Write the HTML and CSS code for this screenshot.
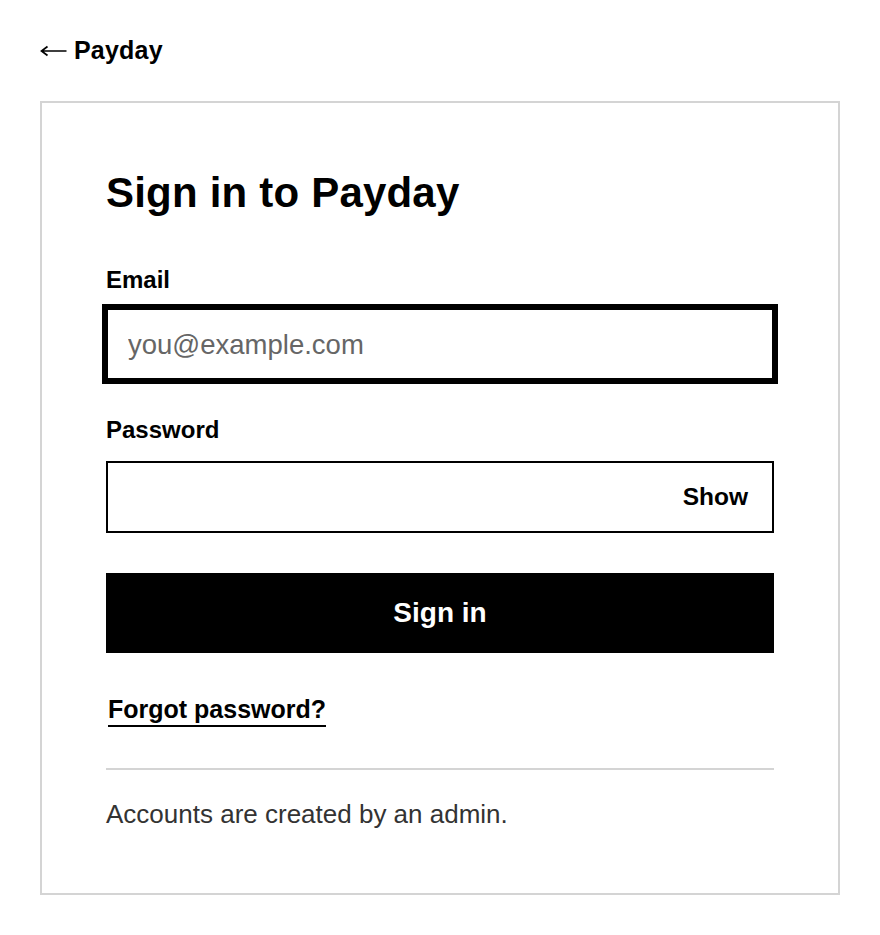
FILE: index.html
```html
<!DOCTYPE html>
<html lang="en">
<head>
<meta charset="utf-8">
<title>Sign in to Payday</title>
<link rel="stylesheet" href="styles.css">
</head>
<body>
<main class="page">
  <a class="back" href="#"><svg class="back-arrow" width="27" height="12" viewBox="0 0 27 12" aria-hidden="true"><path d="M1.5 6H26.5M7.5 1.5L1.5 6L7.5 10.5" fill="none" stroke="#000" stroke-width="1.7" stroke-linecap="butt" stroke-linejoin="miter"/></svg><span>Payday</span></a>
  <section class="card">
    <h1 class="title">Sign in to Payday</h1>
    <form class="form">
      <label class="label" for="email">Email</label>
      <input class="input input-focus" id="email" type="email" placeholder="you@example.com">
      <label class="label label-pw" for="pw">Password</label>
      <div class="pw-wrap">
        <input class="input" id="pw" type="password">
        <button type="button" class="show">Show</button>
      </div>
      <button type="submit" class="submit">Sign in</button>
    </form>
    <a class="forgot" href="#">Forgot password?</a>
    <hr class="rule">
    <p class="note">Accounts are created by an admin.</p>
  </section>
</main>
</body>
</html>
```
FILE: styles.css
```css
* { box-sizing: border-box; }
html, body { margin: 0; padding: 0; background: #fff; }
body {
  font-family: "Liberation Sans", Arial, Helvetica, sans-serif;
  color: #000;
}
.page {
  padding: 34px 40px 40px;
}
.back {
  display: inline-flex;
  align-items: center;
  gap: 7px;
  font-size: 25px;
  line-height: 32px;
  font-weight: 700;
  color: #000;
  text-decoration: none;
  letter-spacing: 0.2px;
}
.back-arrow {
  display: block;
  margin-top: 2px;
}
.card {
  margin-top: 35px;
  width: 800px;
  border: 2px solid #d4d4d4;
  padding: 64px;
}
.title {
  margin: 0;
  font-size: 42px;
  line-height: 52px;
  font-weight: 700;
  letter-spacing: 0.2px;
}
.form {
  display: flex;
  flex-direction: column;
  margin-top: 46px;
}
.label {
  font-size: 24px;
  line-height: 30px;
  font-weight: 700;
  margin-bottom: 13px;
}
.label-pw { margin-top: 35px; margin-bottom: 16px; }
.input {
  width: 100%;
  height: 72px;
  border: 2px solid #000;
  border-radius: 0;
  padding: 2px 20px 0;
  font-family: inherit;
  font-size: 27.5px;
  color: #000;
  background: #fff;
}
.input::placeholder { color: #666; }
.input-focus {
  outline: 4px solid #000;
  outline-offset: 0;
}
.pw-wrap {
  position: relative;
}
.show {
  position: absolute;
  right: 26px;
  top: 50%;
  transform: translateY(-50%);
  border: 0;
  background: none;
  padding: 0;
  font-family: inherit;
  font-size: 24.5px;
  font-weight: 700;
  color: #000;
}
.submit {
  margin-top: 40px;
  height: 80px;
  width: 100%;
  border: 0;
  background: #000;
  color: #fff;
  font-family: inherit;
  font-size: 28px;
  font-weight: 700;
}
.forgot {
  display: inline-block;
  margin-top: 41px;
  margin-left: 2px;
  font-size: 25px;
  line-height: 31px;
  font-weight: 700;
  color: #000;
  text-decoration: none;
  border-bottom: 2px solid #000;
}
.rule {
  margin: 41px 0 0;
  border: 0;
  border-top: 2px solid #d4d4d4;
}
.note {
  margin: 29px 0 0;
  font-size: 26px;
  line-height: 30px;
  color: #333;
}
```
